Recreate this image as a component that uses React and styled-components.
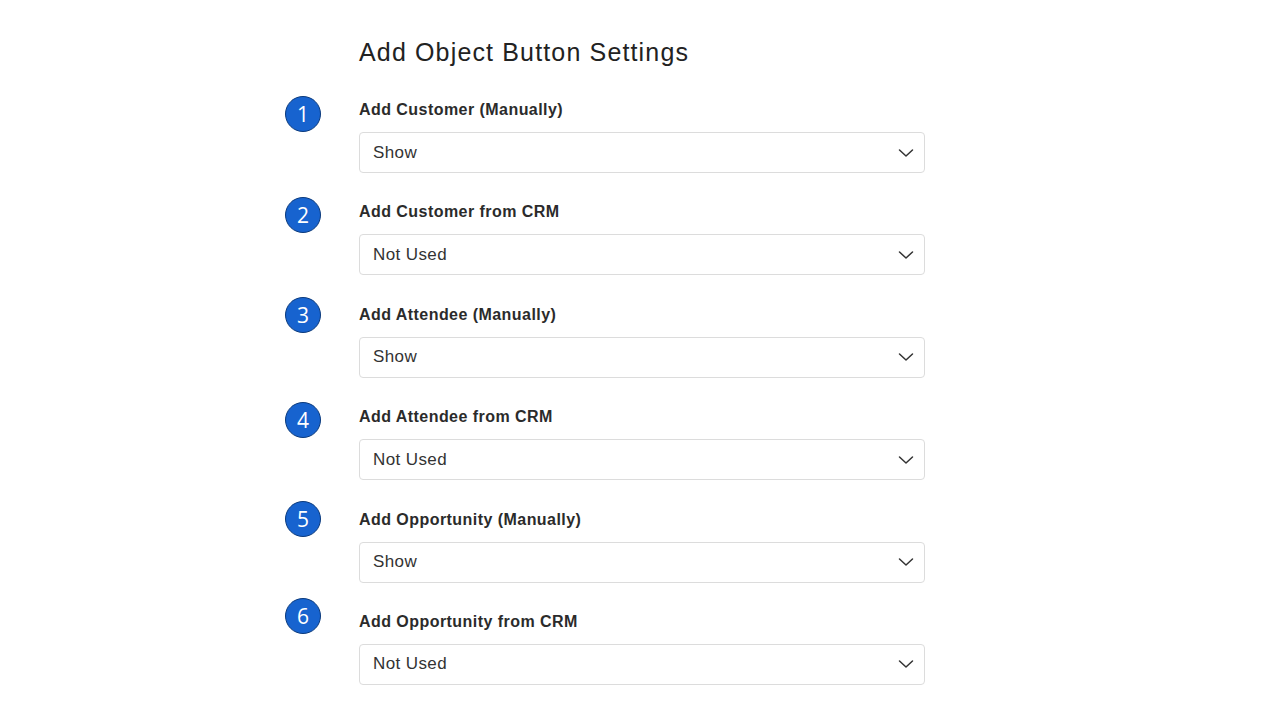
import styled, { createGlobalStyle } from "styled-components";

const Global = createGlobalStyle`
    html, body {
        margin: 0;
        padding: 0;
        background: #ffffff;
    }
    body {
        font-family: "Liberation Sans", Arial, sans-serif;
        color: #2b2b2b;
    }
`;

const Page = styled.main`
    width: 1280px;
    height: 720px;
    box-sizing: border-box;
    padding: 38px 0 0 285px;
    overflow: hidden;
`;

const Title = styled.h1`
    margin: 0 0 33px 74px;
    font-size: 25px;
    line-height: 29px;
    font-weight: 400;
    letter-spacing: 1.15px;
    color: #222;
`;

const List = styled.div`
    display: flex;
    flex-direction: column;
    gap: 29.4px;
`;

const Row = styled.section`
    display: grid;
    grid-template-columns: 36px 566px;
    column-gap: 38px;
    align-items: start;
`;

const Badge = styled.div`
    width: 36px;
    height: 36px;
    box-sizing: border-box;
    border-radius: 50%;
    background: #1763cf;
    border: 1px solid #0b3a7c;
    color: #fff;
    font-family: "Open Sans", "Noto Sans", sans-serif;
    font-size: 21px;
    line-height: 34px;
    text-align: center;
    margin-top: ${(p) => -8 + p.$shift}px;
`;

const Field = styled.div`
    display: flex;
    flex-direction: column;
    gap: 12px;
`;

const Label = styled.label`
    font-size: 16px;
    line-height: 20px;
    font-weight: 700;
    letter-spacing: 0.45px;
    color: #2b2b2b;
`;

const Select = styled.div`
    height: 41px;
    box-sizing: border-box;
    border: 1px solid #dcdcdc;
    border-radius: 4px;
    display: flex;
    align-items: center;
    justify-content: space-between;
    padding: 0 10px 0 13px;
    font-size: 17px;
    letter-spacing: 0.4px;
    color: #333;
    background: #fff;
`;

const Chevron = () => (
    <svg width="17" height="10" viewBox="0 0 17 10" fill="none">
        <path d="M2.5 2 L9 8 L15.5 2" stroke="#333" strokeWidth="1.5" strokeLinecap="round" strokeLinejoin="round" />
    </svg>
);

const settings = [
    { label: "Add Customer (Manually)", value: "Show", shift: 4 },
    { label: "Add Customer from CRM", value: "Not Used", shift: 3 },
    { label: "Add Attendee (Manually)", value: "Show", shift: 0 },
    { label: "Add Attendee from CRM", value: "Not Used", shift: 3 },
    { label: "Add Opportunity (Manually)", value: "Show", shift: -1 },
    { label: "Add Opportunity from CRM", value: "Not Used", shift: -6 },
];

export default function App() {
    return (
        <>
            <Global />
            <Page>
                <Title>Add Object Button Settings</Title>
                <List>
                    {settings.map((s, i) => (
                        <Row key={s.label}>
                            <Badge $shift={s.shift}>{i + 1}</Badge>
                            <Field>
                                <Label>{s.label}</Label>
                                <Select>
                                    <span>{s.value}</span>
                                    <Chevron />
                                </Select>
                            </Field>
                        </Row>
                    ))}
                </List>
            </Page>
        </>
    );
}
